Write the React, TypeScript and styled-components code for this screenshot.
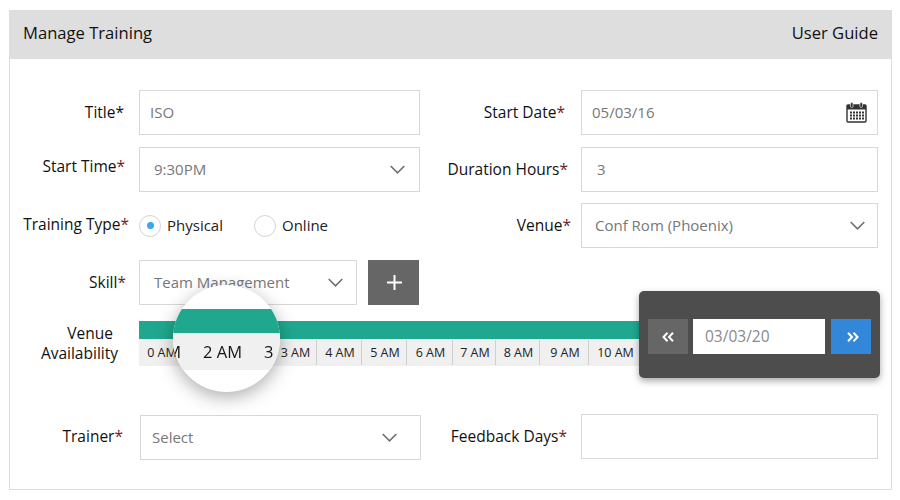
import React from "react";
import styled, { createGlobalStyle } from "styled-components";

const ticks = [
  { label: "0 AM", width: 45 },
  { label: "1 AM", width: 45 },
  { label: "2 AM", width: 44 },
  { label: "3 AM", width: 44 },
  { label: "4 AM", width: 45 },
  { label: "5 AM", width: 45 },
  { label: "6 AM", width: 46 },
  { label: "7 AM", width: 43 },
  { label: "8 AM", width: 44 },
  { label: "9 AM", width: 49 },
  { label: "10 AM", width: 51 },
];

const Chevron = () => (
  <svg width="15" height="9" viewBox="0 0 15 9" fill="none">
    <polyline points="0.7,1 7.5,7.8 14.3,1" stroke="#6f6f6f" strokeWidth="1.6" />
  </svg>
);

const DoubleChevron = ({ flip }: { flip?: boolean }) => (
  <svg width="12" height="10" viewBox="0 0 12 10" fill="none">
    <g stroke="#fff" strokeWidth="2" transform={flip ? "matrix(-1 0 0 1 12 0)" : undefined}>
      <polyline points="5.5,0.8 1.5,5 5.5,9.2" />
      <polyline points="11,0.8 7,5 11,9.2" />
    </g>
  </svg>
);

const CalendarIcon = () => (
  <svg width="21" height="21" viewBox="0 0 21 21">
    <rect x="1" y="3" width="19" height="17" rx="1" fill="none" stroke="#333" strokeWidth="1.4" />
    <rect x="1" y="3" width="19" height="4.5" fill="#333" />
    <rect x="4.5" y="0.5" width="2.6" height="5" rx="1.2" fill="#333" stroke="#fff" strokeWidth="0.6" />
    <rect x="13.9" y="0.5" width="2.6" height="5" rx="1.2" fill="#333" stroke="#fff" strokeWidth="0.6" />
    <g fill="#333">
      {[9.5, 12.5, 15.5].map((y) =>
        [4, 7, 10, 13, 16].map((x) => <rect key={`${x}-${y}`} x={x} y={y} width="2" height="2" />)
      )}
    </g>
  </svg>
);

const App: React.FC = () => {
  return (
    <>
      <GlobalStyle />
      <Panel>
        <Header>
          <span>Manage Training</span>
          <span>User Guide</span>
        </Header>
        <Form>
          <Row>
            <Label $right={15}>Title<Star $plain>*</Star></Label>
            <Field $pad={10}>ISO</Field>
            <Label $right={16}>Start Date<Star>*</Star></Label>
            <Field $pad={10} $end={10}>
              05/03/16
              <CalendarIcon />
            </Field>
          </Row>
          <Row>
            <Label $right={14} $lift={6}>Start Time<Star>*</Star></Label>
            <Field $pad={14} $end={14}>
              9:30PM
              <Chevron />
            </Field>
            <Label $right={13}>Duration Hours<Star>*</Star></Label>
            <Field $pad={15}>3</Field>
          </Row>
          <Row>
            <Label $right={10} $lift={2}>Training Type<Star>*</Star></Label>
            <RadioGroup>
              <RadioItem>
                <Radio $checked />
                <RadioText>Physical</RadioText>
              </RadioItem>
              <RadioItem>
                <Radio />
                <RadioText>Online</RadioText>
              </RadioItem>
            </RadioGroup>
            <Label $right={10}>Venue<Star>*</Star></Label>
            <Field $pad={13} $end={12}>
              Conf Rom (Phoenix)
              <Chevron />
            </Field>
          </Row>
          <Row>
            <Label $right={13}>Skill<Star>*</Star></Label>
            <SkillCell>
              <Field $pad={14} $end={13}>
                Team Management
                <Chevron />
              </Field>
              <AddButton>
                <svg width="15" height="15" viewBox="0 0 15 15">
                  <path d="M7.5 0v15M0 7.5h15" stroke="#fff" strokeWidth="2" />
                </svg>
              </AddButton>
            </SkillCell>
          </Row>
          <TimelineRow>
            <TimelineLabel>
              <VenueWord>Venue</VenueWord>
              Availability
            </TimelineLabel>
            <Timeline>
              <TimelineBar />
              <TickRow>
                {ticks.map((t) => (
                  <Tick key={t.label} style={{ width: t.width }}>
                    {t.label}
                  </Tick>
                ))}
              </TickRow>
            </Timeline>
          </TimelineRow>
          <BottomRow>
            <Label $right={16}>Trainer<Star>*</Star></Label>
            <TrainerField $pad={11} $end={23}>
              Select
              <Chevron />
            </TrainerField>
            <Label $right={14}>Feedback Days<Star>*</Star></Label>
            <Field $pad={10} />
          </BottomRow>
        </Form>

        <Lens>
          <LensBar />
          <LensTicks>
            <LensTick>1 AM</LensTick>
            <LensTick>2 AM</LensTick>
            <LensTick>3 AM</LensTick>
          </LensTicks>
        </Lens>

        <DatePopover>
          <NavButton>
            <DoubleChevron />
          </NavButton>
          <DateInput>03/03/20</DateInput>
          <NavButton $primary>
            <DoubleChevron flip />
          </NavButton>
        </DatePopover>
      </Panel>
    </>
  );
};

export default App;

const GlobalStyle = createGlobalStyle`
  html, body {
    margin: 0;
    padding: 0;
    background: #fff;
  }
  body {
    font-family: "Open Sans", "Noto Sans", sans-serif;
    color: #111;
  }
`;

const Panel = styled.div`
  position: relative;
  box-sizing: border-box;
  width: 883px;
  height: 480px;
  margin: 10px 0 0 9px;
  border: 1px solid #dcdcdc;
  overflow: visible;
`;

const Header = styled.div`
  box-sizing: border-box;
  height: 49px;
  background: #dedede;
  display: flex;
  justify-content: space-between;
  align-items: center;
  padding: 0 14px 4px 14px;
  font-size: 16.6px;
  font-weight: 500;
  color: #111;
  margin: -1px -1px 0;
`;

const Form = styled.div`
  padding-top: 31px;
  display: flex;
  flex-direction: column;
`;

const Row = styled.div`
  display: grid;
  grid-template-columns: 129px 281px 161px 297px;
  height: 45px;
  margin-bottom: 12px;

  &:nth-child(2) {
    margin-bottom: 11px;
  }
`;

const Label = styled.div<{ $right: number; $lift?: number }>`
  display: flex;
  justify-content: flex-end;
  align-items: center;
  white-space: nowrap;
  font-size: 15.5px;
  font-weight: 500;
  color: #111;
  padding-right: ${(props) => props.$right}px;
  padding-bottom: ${(props) => (props.$lift || 0) + 2}px;
`;

const Star = styled.span<{ $plain?: boolean }>`
  color: ${(props) => (props.$plain ? "#111" : "#6d1f1f")};
`;

const Field = styled.div<{ $pad: number; $end?: number }>`
  box-sizing: border-box;
  flex: 1;
  height: 45px;
  display: flex;
  justify-content: space-between;
  align-items: center;
  border: 1px solid #d8d8d8;
  background: #fff;
  font-size: 15px;
  color: #777;
  padding: 0 ${(props) => props.$end || 0}px 2px ${(props) => props.$pad}px;
  white-space: nowrap;

  svg {
    margin-top: 2px;
  }
`;

const TrainerField = styled(Field)`
  margin: 1px -1px 0 1px;
`;

const RadioGroup = styled.div`
  display: flex;
  align-items: center;
  gap: 31px;
`;

const RadioItem = styled.div`
  display: flex;
  align-items: center;
  gap: 6px;
  font-size: 15px;
  color: #222;
`;

const RadioText = styled.span`
  margin-bottom: 2px;
`;

const Radio = styled.span<{ $checked?: boolean }>`
  box-sizing: border-box;
  width: 22px;
  height: 22px;
  border-radius: 50%;
  border: 1px solid #d4d4d4;
  background: #fff;
  display: flex;
  align-items: center;
  justify-content: center;

  &::after {
    content: "";
    width: 7px;
    height: 7px;
    border-radius: 50%;
    background: ${(props) => (props.$checked ? "#35a9f0" : "transparent")};
  }
`;

const SkillCell = styled.div`
  display: flex;
  gap: 11px;
  padding-right: 1px;
`;

const AddButton = styled.div`
  box-sizing: border-box;
  width: 51px;
  height: 45px;
  padding-left: 2px;
  background: #666;
  display: flex;
  align-items: center;
  justify-content: center;
`;

const TimelineRow = styled.div`
  display: flex;
  margin-top: 4px;
  height: 45px;
`;

const TimelineLabel = styled.div`
  box-sizing: border-box;
  width: 129px;
  padding: 2px 21px 0 0;
  text-align: right;
  font-size: 15.5px;
  font-weight: 500;
  line-height: 20px;
  color: #111;
`;

const VenueWord = styled.div`
  padding-right: 5px;
`;

const Timeline = styled.div`
  display: flex;
  flex-direction: column;
  width: 510px;
`;

const TimelineBar = styled.div`
  height: 18px;
  background: #1fa88e;
`;

const TickRow = styled.div`
  display: flex;
  height: 27px;
  background: #f0f0f0;
`;

const Tick = styled.div`
  box-sizing: border-box;
  flex-shrink: 0;
  display: flex;
  align-items: center;
  justify-content: center;
  padding-left: 2px;
  font-size: 12.5px;
  color: #222;
  border-right: 1px solid #cfcfcf;
  margin: 1px 0;

  &:last-child {
    border-right: none;
  }
`;

const BottomRow = styled(Row)`
  margin-top: 48px;
  margin-bottom: 0;
`;

const Lens = styled.div`
  position: absolute;
  left: 163px;
  top: 274px;
  width: 107px;
  height: 107px;
  border-radius: 50%;
  background: #fff;
  overflow: hidden;
  padding-top: 24px;
  box-sizing: border-box;
  filter: drop-shadow(0 5px 9px rgba(0, 0, 0, 0.32));
`;

const LensBar = styled.div`
  height: 24px;
  background: #1fa88e;
`;

const LensTicks = styled.div`
  height: 37px;
  background: #f0f0f0;
  display: flex;
  align-items: center;
  margin-left: -42px;
  width: 200px;
`;

const LensTick = styled.div`
  width: 61px;
  flex-shrink: 0;
  text-align: center;
  font-size: 16.5px;
  font-weight: 500;
  color: #151515;
  white-space: nowrap;
`;

const DatePopover = styled.div`
  position: absolute;
  left: 629px;
  top: 280px;
  box-sizing: border-box;
  width: 241px;
  height: 87px;
  border-radius: 5px;
  background: #4d4d4d;
  box-shadow: 0 3px 7px rgba(0, 0, 0, 0.35);
  display: flex;
  align-items: center;
  padding: 4px 9px 0;
  gap: 5px;
`;

const NavButton = styled.div<{ $primary?: boolean }>`
  box-sizing: border-box;
  width: 40px;
  height: 35px;
  flex-shrink: 0;
  display: flex;
  align-items: center;
  justify-content: center;
  padding-left: ${(props) => (props.$primary ? 4 : 0)}px;
  background: ${(props) => (props.$primary ? "#3387d9" : "#666")};
`;

const DateInput = styled.div`
  box-sizing: border-box;
  width: 132px;
  height: 35px;
  margin-right: 1px;
  background: #fff;
  display: flex;
  align-items: center;
  padding: 0 0 2px 12px;
  font-size: 15.5px;
  color: #8a8a8a;
`;
